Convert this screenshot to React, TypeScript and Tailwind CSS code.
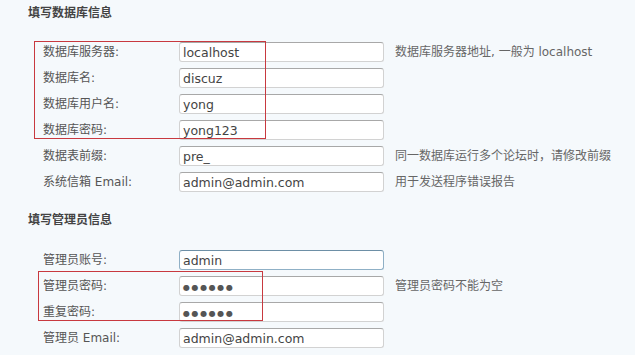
import React from 'react';

interface FieldRow {
  label: string;
  value: string;
  hint?: string;
  password?: boolean;
  focused?: boolean;
}

const dbRows: FieldRow[] = [
  { label: '数据库服务器:', value: 'localhost', hint: '数据库服务器地址, 一般为 localhost' },
  { label: '数据库名:', value: 'discuz' },
  { label: '数据库用户名:', value: 'yong' },
  { label: '数据库密码:', value: 'yong123' },
  { label: '数据表前缀:', value: 'pre_', hint: '同一数据库运行多个论坛时，请修改前缀' },
  { label: '系统信箱 Email:', value: 'admin@admin.com', hint: '用于发送程序错误报告' },
];

const adminRows: FieldRow[] = [
  { label: '管理员账号:', value: 'admin', focused: true },
  { label: '管理员密码:', value: '', password: true, hint: '管理员密码不能为空' },
  { label: '重复密码:', value: '', password: true },
  { label: '管理员 Email:', value: 'admin@admin.com' },
];

const font = { fontFamily: '"DejaVu Sans", "Noto Sans CJK SC", sans-serif' };

const Row: React.FC<{ row: FieldRow }> = ({ row }) => (
  <div className="flex h-[20px] items-center">
    <div className="w-[179px] shrink-0 pl-[43px] text-[12px] text-[#555] whitespace-nowrap">
      {row.label}
    </div>
    <div
      className={`flex h-[20px] w-[205px] shrink-0 items-center rounded-[3px] border bg-white pl-[3px] pt-[3px] text-[12.5px] text-[#444] ${
        row.focused
          ? 'border-[#8fb0c6] border-t-[#6d8fa6]'
          : 'border-[#d2d2d2] border-t-[#a8a8a8]'
      }`}
    >
      {row.password ? (
        <span className="text-[8px] tracking-[1.6px] text-[#555]">●●●●●●</span>
      ) : (
        row.value
      )}
    </div>
    {row.hint && (
      <div className="ml-[11px] whitespace-nowrap text-[12px] text-[#666]">{row.hint}</div>
    )}
  </div>
);

export default function App() {
  return (
    <div className="relative h-[355px] w-[635px] overflow-hidden bg-[#f5f9fc]" style={font}>
      <div className="pt-[6px]">
        <h3 className="pl-[28px] text-[12px] font-bold leading-[14px] text-[#444]">填写数据库信息</h3>
        <div className="mt-[22px] flex flex-col gap-[6px]">
          {dbRows.map((r) => (
            <Row key={r.label} row={r} />
          ))}
        </div>
        <h3 className="mt-[21px] pl-[28px] text-[12px] font-bold leading-[14px] text-[#444]">填写管理员信息</h3>
        <div className="mt-[23px] flex flex-col gap-[6px]">
          {adminRows.map((r) => (
            <Row key={r.label} row={r} />
          ))}
        </div>
      </div>

      {/* annotation boxes */}
      <div className="absolute left-[34px] top-[41px] h-[98px] w-[232px] border border-[#c8393f]" />
      <div className="absolute left-[38px] top-[271px] h-[50px] w-[225px] border border-[#c8393f]" />
    </div>
  );
}
